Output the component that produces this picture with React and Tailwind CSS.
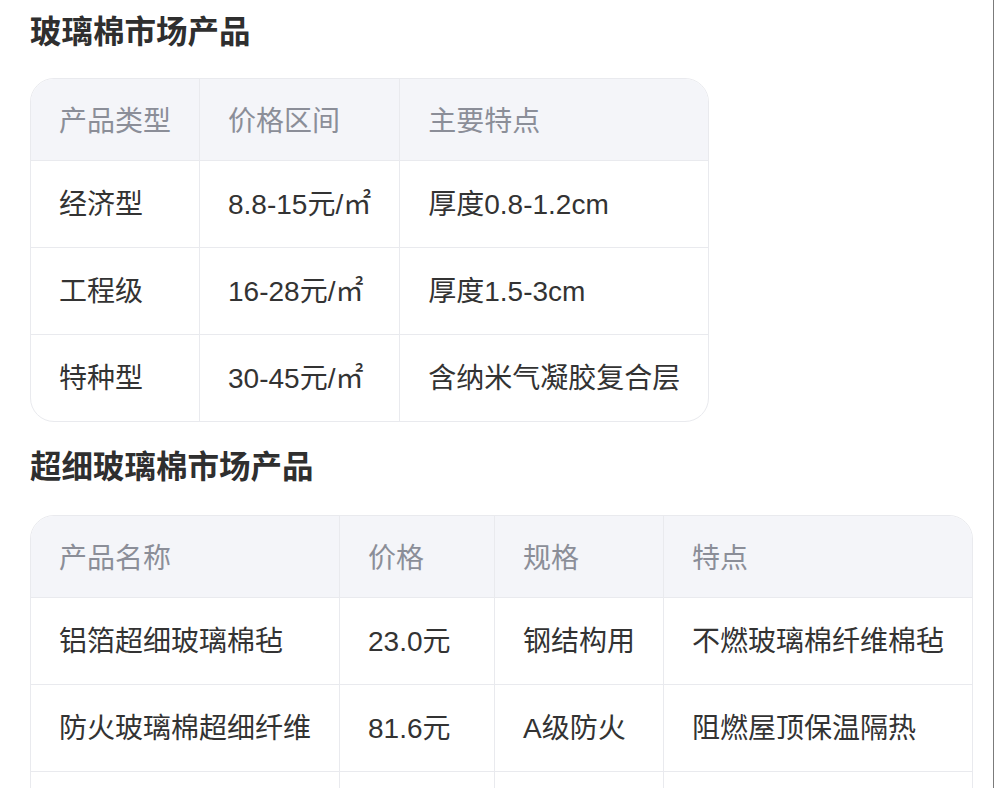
const font = { fontFamily: '"Liberation Sans", "Noto Sans CJK SC", sans-serif' }

const marketRows = [
  ['经济型', '8.8-15元/㎡', '厚度0.8-1.2cm'],
  ['工程级', '16-28元/㎡', '厚度1.5-3cm'],
  ['特种型', '30-45元/㎡', '含纳米气凝胶复合层'],
]

const ultraRows = [
  ['铝箔超细玻璃棉毡', '23.0元', '钢结构用', '不燃玻璃棉纤维棉毡'],
  ['防火玻璃棉超细纤维', '81.6元', 'A级防火', '阻燃屋顶保温隔热'],
  ['超细玻璃棉卷毡', '128.0元', '厚度5cm', '吸音降噪'],
]

function DataTable({ head, rows }) {
  return (
    <div className="w-fit border border-[#e9eaee] rounded-3xl overflow-hidden">
      <table className="border-collapse text-left">
        <thead>
          <tr className="bg-[#f4f5f9]">
            {head.map((h, i) => (
              <th
                key={h}
                className={
                  'px-7 pt-[22px] pb-[17px] text-[28px] leading-[42px] font-normal text-[#8b8e98] whitespace-nowrap border-b border-[#e9eaee] ' +
                  (i < head.length - 1 ? 'border-r' : '')
                }
              >
                {h}
              </th>
            ))}
          </tr>
        </thead>
        <tbody>
          {rows.map((row, r) => (
            <tr key={r}>
              {row.map((c, i) => (
                <td
                  key={i}
                  className={
                    'px-7 pt-[23px] pb-[21px] text-[28px] leading-[42px] text-[#333333] whitespace-nowrap border-[#e9eaee] ' +
                    (i < row.length - 1 ? 'border-r ' : '') +
                    (r < rows.length - 1 ? 'border-b' : '')
                  }
                >
                  {c}
                </td>
              ))}
            </tr>
          ))}
        </tbody>
      </table>
    </div>
  )
}

export default function App() {
  return (
    <div style={font} className="h-screen bg-white border-r border-[#7b7b7b] overflow-hidden">
      <div className="px-[30px] pt-2">
        <h2 className="text-[31.5px] leading-[48px] font-bold text-[#2f2f2f]">玻璃棉市场产品</h2>
        <div className="mt-[22px]">
          <DataTable head={['产品类型', '价格区间', '主要特点']} rows={marketRows} />
        </div>
        <h2 className="mt-[21px] text-[31.5px] leading-[48px] font-bold text-[#2f2f2f]">超细玻璃棉市场产品</h2>
        <div className="mt-[24px]">
          <DataTable head={['产品名称', '价格', '规格', '特点']} rows={ultraRows} />
        </div>
      </div>
    </div>
  )
}
